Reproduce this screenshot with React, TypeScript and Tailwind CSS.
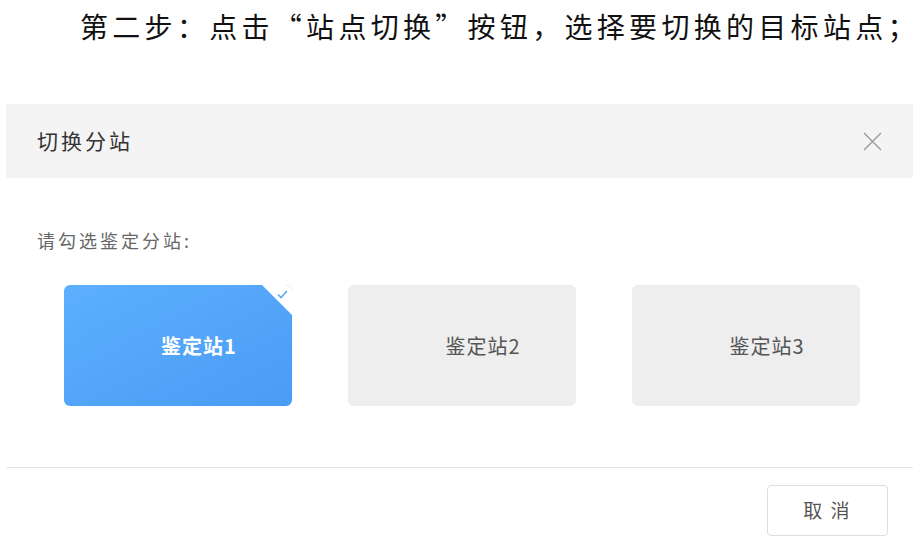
const font = { fontFamily: '"Noto Sans CJK SC", "Noto Sans", sans-serif' };

const stations = ['鉴定站1', '鉴定站2', '鉴定站3'];

const CloseIcon = () => (
  <svg width="19" height="19" viewBox="0 0 19 19" fill="none" stroke="#9a9a9a" strokeWidth="1.4">
    <path d="M1 1 L18 18 M18 1 L1 18" />
  </svg>
);

const StationCard = ({ name, active }: { name: string; active: boolean }) =>
  active ? (
    <div className="relative flex h-[121px] w-[228px] items-center justify-center overflow-hidden rounded-md bg-gradient-to-br from-[#5cb0fe] to-[#4a9bf5] pl-[42px]">
      <span className="text-[20px] font-bold tracking-[1px] text-white">{name}</span>
      <div className="absolute right-0 top-0 h-0 w-0 border-l-[30px] border-t-[30px] border-l-transparent border-t-white" />
      <svg className="absolute right-[4px] top-[5px]" width="11" height="9" viewBox="0 0 11 9" fill="none" stroke="#5aa6f8" strokeWidth="1.6">
        <path d="M1 4.5 L4 7.5 L10 1" />
      </svg>
    </div>
  ) : (
    <div className="flex h-[121px] w-[228px] items-center justify-center rounded-md bg-[#eeeeee] pl-[42px]">
      <span className="text-[20px] tracking-[1px] text-[#555]">{name}</span>
    </div>
  );

const App = () => (
  <div className="h-[550px] w-[919px] overflow-hidden bg-white" style={font}>
    <div className="flex h-[50px] items-center pl-[80px] pt-[2px]">
      <span className="whitespace-nowrap text-[28px] leading-[40px] tracking-[4.3px] text-[#111]">
        第二步：点击“站点切换”按钮，选择要切换的目标站点；
      </span>
    </div>

    <div className="mx-[6px] mt-[54px]">
      <div className="flex h-[74px] items-center justify-between bg-[#f4f4f4] pl-[31px] pr-[31px]">
        <span className="text-[21px] tracking-[3px] text-[#333]">切换分站</span>
        <CloseIcon />
      </div>

      <div className="h-[290px] border-b border-[#e6e6e6] pt-[50px]">
        <div className="pl-[31px] text-[18px] leading-[24px] tracking-[3px] text-[#666]">请勾选鉴定分站:</div>
        <div className="mt-[33px] flex gap-[56px] pl-[58px]">
          {stations.map((s, i) => (
            <StationCard key={s} name={s} active={i === 0} />
          ))}
        </div>
      </div>

      <div className="flex justify-end pr-[25px] pt-[17px]">
        <button className="h-[51px] w-[121px] rounded border border-[#dddddd] bg-white text-[19px] tracking-[2px] text-[#555]">
          取 消
        </button>
      </div>
    </div>
  </div>
);

export default App;
